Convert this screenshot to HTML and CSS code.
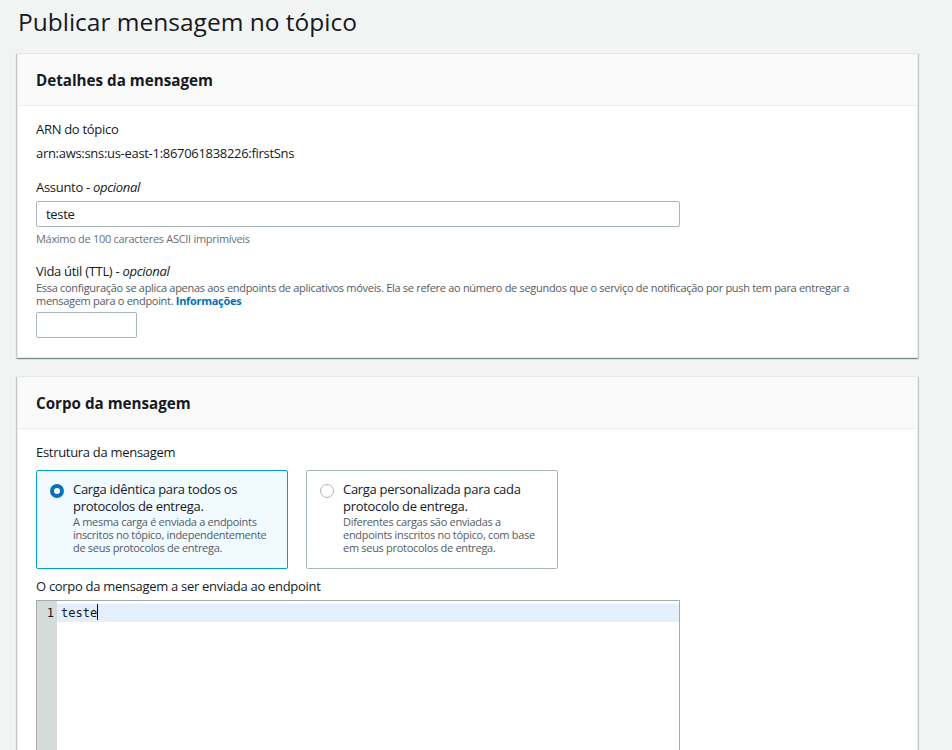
FILE: index.html
```html
<!DOCTYPE html>
<html lang="pt">
<head>
<meta charset="utf-8">
<link rel="stylesheet" href="styles.css">
</head>
<body>
<main class="page">
  <h1 class="title">Publicar mensagem no tópico</h1>

  <section class="panel">
    <header class="panel-head"><h2>Detalhes da mensagem</h2></header>
    <div class="panel-body">
      <div class="field">
        <div class="label">ARN do tópico</div>
        <div class="value">arn:aws:sns:us-east-1:867061838226:firstSns</div>
      </div>
      <div class="field">
        <div class="label">Assunto - <i>opcional</i></div>
        <div class="input wide">teste</div>
        <div class="hint">Máximo de 100 caracteres ASCII imprimíveis</div>
      </div>
      <div class="field">
        <div class="label">Vida útil (TTL) - <i>opcional</i></div>
        <div class="desc">Essa configuração se aplica apenas aos endpoints de aplicativos móveis. Ela se refere ao número de segundos que o serviço de notificação por push tem para entregar a mensagem para o endpoint. <a class="info">Informações</a></div>
        <div class="input small"></div>
      </div>
    </div>
  </section>

  <section class="panel">
    <header class="panel-head"><h2>Corpo da mensagem</h2></header>
    <div class="panel-body">
      <div class="field">
        <div class="label">Estrutura da mensagem</div>
        <div class="tiles">
          <div class="tile selected">
            <span class="radio on"></span>
            <div class="tile-text">
              <div class="tile-title">Carga idêntica para todos os protocolos de entrega.</div>
              <div class="tile-desc">A mesma carga é enviada a endpoints inscritos no tópico, independentemente de seus protocolos de entrega.</div>
            </div>
          </div>
          <div class="tile">
            <span class="radio"></span>
            <div class="tile-text">
              <div class="tile-title">Carga personalizada para cada protocolo de entrega.</div>
              <div class="tile-desc">Diferentes cargas são enviadas a endpoints inscritos no tópico, com base em seus protocolos de entrega.</div>
            </div>
          </div>
        </div>
      </div>
      <div class="field tight">
        <div class="label">O corpo da mensagem a ser enviada ao endpoint</div>
        <div class="editor">
          <div class="gutter"><div class="ln">1</div></div>
          <div class="code">
            <div class="line active">teste<span class="caret"></span></div>
          </div>
        </div>
      </div>
    </div>
  </section>
</main>
</body>
</html>
```
FILE: styles.css
```css
html, body {
  margin: 0;
  padding: 0;
  background: #f2f3f3;
  height: 750px;
  overflow: hidden;
}
body {
  font-family: "Open Sans", "Noto Sans", sans-serif;
  color: #16191f;
  font-size: 13px;
  letter-spacing: -0.3px;
}
.page {
  padding: 0 34px 0 17px;
}
.title {
  margin: 0;
  padding: 6px 0 0 1px;
  height: 47px;
  box-sizing: border-box;
  font-size: 24.5px;
  font-weight: 400;
  line-height: 32px;
  letter-spacing: 0;
  color: #16191f;
}
.panel {
  background: #fff;
  border: 1px solid #eaeded;
  border-top-color: #e4e7e7;
  box-shadow: 0 1px 1px 0 rgba(0, 28, 36, .3), 1px 1px 1px 0 rgba(0, 28, 36, .15), -1px 1px 1px 0 rgba(0, 28, 36, .15);
  margin-bottom: 18px;
  margin-top: 6px;
}
.panel + .panel { margin-top: 0; }
.panel-head {
  background: #fafafa;
  border-bottom: 1px solid #eaeded;
  height: 52px;
  box-sizing: border-box;
  padding: 0 18px;
  display: flex;
  align-items: center;
}
.panel-head h2 {
  margin: 0;
  font-size: 15.2px;
  font-weight: 700;
  letter-spacing: 0;
  color: #16191f;
}
.panel-body {
  padding: 13px 18px 19px;
}
.field + .field { margin-top: 14px; }
.field + .field.tight { margin-top: 7px; }
.label {
  font-size: 13px;
  line-height: 20px;
  color: #16191f;
}
.label i { font-style: italic; }
.value {
  font-size: 13px;
  line-height: 20px;
  margin-top: 4px;
}
.input {
  border: 1px solid #aab7b8;
  border-radius: 2px;
  height: 26px;
  box-sizing: border-box;
  padding: 0 9px;
  font-size: 13px;
  line-height: 24px;
  background: #fff;
  margin-top: 4px;
}
.input.wide { width: 644px; }
.input.small { width: 101px; margin-top: 5px; }
.hint {
  font-size: 11px;
  color: #687078;
  line-height: 16px;
  margin-top: 4px;
}
.desc {
  font-size: 11px;
  color: #545b64;
  line-height: 13px;
  padding-right: 40px;
}
.info {
  color: #0073bb;
  font-weight: 700;
}
.tiles {
  display: flex;
  gap: 18px;
  margin-top: 8px;
}
.tile {
  width: 252px;
  height: 99px;
  box-sizing: border-box;
  border: 1px solid #aab7b8;
  border-radius: 2px;
  padding: 10px 12px 0 13px;
  display: flex;
  gap: 9px;
}
.tile.selected {
  background: #f1faff;
  border-color: #00a1c9;
}
.radio {
  width: 14px;
  height: 14px;
  box-sizing: border-box;
  border: 1px solid #aab7b8;
  border-radius: 50%;
  flex: none;
  margin-top: 3px;
  background: #fff;
}
.radio.on {
  border: 4px solid #0073bb;
}
.tile-title {
  font-size: 13px;
  line-height: 17px;
}
.tile-desc {
  font-size: 11px;
  line-height: 13px;
  color: #545b64;
}
.editor {
  margin-top: 4px;
  width: 644px;
  height: 200px;
  box-sizing: border-box;
  border: 1px solid #a3abab;
  display: flex;
  background: #fff;
}
.gutter {
  width: 20px;
  background: #d5dbdb;
  flex: none;
  padding-top: 3px;
}
.ln {
  font-family: "DejaVu Sans Mono", "Liberation Mono", monospace;
  font-size: 12px;
  line-height: 18px;
  letter-spacing: 0;
  text-align: right;
  padding-right: 3px;
}
.code {
  flex: 1;
  padding-top: 3px;
}
.line {
  font-family: "DejaVu Sans Mono", "Liberation Mono", monospace;
  font-size: 12px;
  line-height: 18px;
  letter-spacing: 0;
  padding-left: 4px;
}
.line.active { background: #e3effc; }
.caret {
  display: inline-block;
  width: 1px;
  height: 16px;
  background: #000;
  vertical-align: -3px;
}
```
